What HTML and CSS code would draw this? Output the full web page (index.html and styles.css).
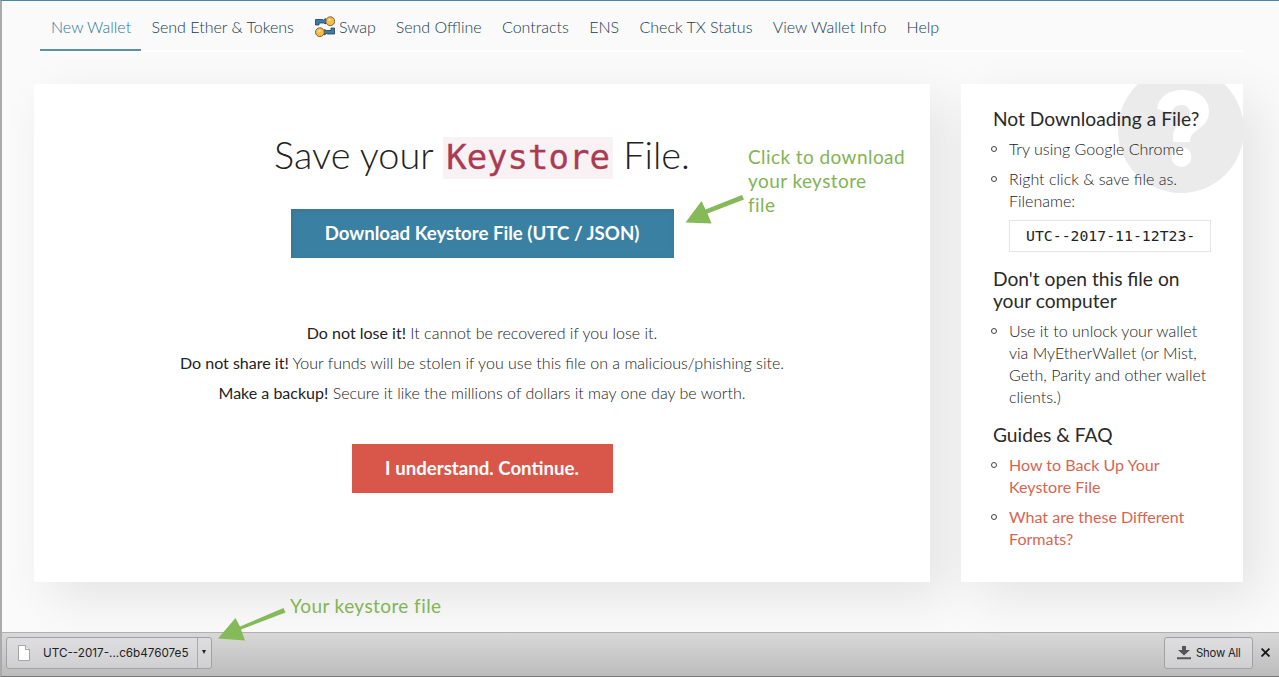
FILE: index.html
```html
<!DOCTYPE html>
<html lang="en">
<head>
<meta charset="utf-8">
<title>Save your Keystore File</title>
<link rel="stylesheet" href="styles.css">
</head>
<body>
<div class="window">
  <nav class="tabs">
    <a class="tab active">New Wallet</a>
    <a class="tab">Send Ether &amp; Tokens</a>
    <a class="tab swap"><svg class="swap-icon" viewBox="0 0 20 22"><path fill="#3d7ca3" stroke="#1c3f55" stroke-width=".8" d="M.5 3.500h7l1 .5 2-1.500v5.500l-2-1H4v2H.5zM19.500 12H16v2.500h-4.500l-2-1v5.500l2-1.500 1 .5h7z"/><circle cx="15.300" cy="5.200" r="4.400" fill="#f5bd45" stroke="#80623c"/><circle cx="4.900" cy="16.200" r="4.400" fill="#f5bd45" stroke="#80623c"/><path d="M13.500 4.500l2-1M3.300 15.500l2-1" stroke="#ffe19a" stroke-width="2"/></svg>Swap</a>
    <a class="tab">Send Offline</a>
    <a class="tab">Contracts</a>
    <a class="tab">ENS</a>
    <a class="tab">Check TX Status</a>
    <a class="tab">View Wallet Info</a>
    <a class="tab">Help</a>
  </nav>
  <div class="content">
    <main class="card main">
      <h1>Save your <code>Keystore</code> File.</h1>
      <button class="btn primary">Download Keystore File (UTC / JSON)</button>
      <div class="warnings">
        <p><strong>Do not lose it!</strong> It cannot be recovered if you lose it.</p>
        <p><strong>Do not share it!</strong> Your funds will be stolen if you use this file on a malicious/phishing site.</p>
        <p><strong>Make a backup!</strong> Secure it like the millions of dollars it may one day be worth.</p>
      </div>
      <button class="btn danger">I understand. Continue.</button>
    </main>
    <aside class="card side">
      <svg class="help-mark" viewBox="0 0 126 126"><circle cx="63" cy="63" r="63" fill="#ebebeb"/><path fill="#fff" d="M39 42C41 29 51 23 65 23c16 0 26 9 26 21 0 10-6 15-12 19-5 4-7 6-7 12H55V70c0-8 4-12 9-16 5-3 8-5 8-9s-4-7-8-7c-6 0-9 3-11 8z"/><circle cx="63.500" cy="90" r="10" fill="#fff"/></svg>
      <h2>Not Downloading a File?</h2>
      <ul>
        <li>Try using Google Chrome</li>
        <li>Right click &amp; save file as.<br>Filename:<div class="filename">UTC--2017-11-12T23-</div></li>
      </ul>
      <h2 class="second">Don't open this file on<br>your computer</h2>
      <ul>
        <li>Use it to unlock your wallet<br>via MyEtherWallet (or Mist,<br>Geth, Parity and other wallet<br>clients.)</li>
      </ul>
      <h2 class="third">Guides &amp; FAQ</h2>
      <ul>
        <li><a>How to Back Up Your<br>Keystore File</a></li>
        <li><a>What are these Different<br>Formats?</a></li>
      </ul>
    </aside>
  </div>
  <footer class="downloads">
    <div class="download">
      <div class="file"><svg class="doc" viewBox="0 0 12 16"><path d="M.5.500h7l4 4v11H.5z" fill="#fff" stroke="#a5a5a5"/><path d="M7.500.500v4h4" fill="#eee" stroke="#a5a5a5"/></svg><span>UTC--2017-...c6b47607e5</span></div>
      <div class="more"></div>
    </div>
    <div class="show"><svg class="down" viewBox="0 0 14 14"><path fill="#555" d="M5 0h4v4h4L7 9.500 1 4h4zM0 11.300h14v2H0z"/></svg><span>Show All</span></div>
    <svg class="close" viewBox="0 0 8 8"><path d="M.5.500l7 7M7.500.500l-7 7" stroke="#151515" stroke-width="1.600"/></svg>
  </footer>
  <div class="note note-a">Click to download<br>your keystore<br>file</div>
  <div class="note note-b">Your keystore file</div>
  <svg class="arrow arrow-a" viewBox="0 0 60 30"><path fill="#86b958" d="M58.500 0l2 4.500L24 18.500l4 10L2 27.500 18 6l4 8.500z"/></svg>
  <svg class="arrow arrow-b" viewBox="0 0 70 34"><path fill="#86b958" d="M67.500 0l2 4.500L25 21.500l4 11L2 30.500 19.500 10l4.500 8.500z"/></svg>
</div>
</body>
</html>
```
FILE: styles.css
```css
* { box-sizing: border-box; }
body { margin: 0; font-family: Lato, "Open Sans", sans-serif; font-weight: 300; font-size: 16px; color: #222; }
.window { position: relative; display: flex; flex-direction: column; height: 677px; overflow: hidden; background: #fafafa; border-top: 1px solid #4c87a5; border-left: 2px solid #aaa; border-bottom: 1px solid #777; }
.tabs { display: flex; height: 51px; margin: 0 36px 0 38px; flex: none; background: linear-gradient(#fff, #fff) bottom / 100% 2px no-repeat; }
.tab { height: 50px; padding: 15px 9.900px 0 10.400px; line-height: 22px; font-size: 16.030px; color: #163a52; white-space: nowrap; }
.active { padding-left: 11px; color: #2f749d; border-bottom: 2px solid #5a8fa8; }
.swap { display: flex; gap: 4px; padding-left: 11.200px; padding-right: 9.300px; }
.swap-icon { width: 20px; height: 22px; }
.content { display: flex; gap: 31px; padding: 32px 36px 0 32px; height: 580px; flex: none; }
.card { background: #fff; height: 498px; box-shadow: 16px 16px 47px rgba(0,0,0,.09); }
.main { width: 896px; display: flex; flex-direction: column; align-items: center; }
h1 { margin: 49px 0 0; height: 44px; font-size: 37.900px; line-height: 44px; font-weight: 300; white-space: nowrap; }
code { display: inline-block; height: 42px; line-height: 40px; padding: 0 3px; background: #f9f2f4; color: #ab3b52; font-family: "DejaVu Sans Mono", monospace; font-size: 34px; -webkit-text-stroke: .3px #ab3b52; }
.btn { display: block; height: 49px; padding: 0; border: 0; color: #fff; font: 700 18.650px/49px Lato, sans-serif; white-space: nowrap; }
.primary { width: 383px; margin-top: 32px; background: #3a80a3; box-shadow: inset 2px 2px 5px rgba(60,110,130,.5); }
.danger { width: 261px; margin-top: 32px; background: #d9574a; }
.warnings { margin-top: 64px; text-align: center; }
.warnings p { margin: 0 0 8px; line-height: 22px; font-size: 16.030px; white-space: nowrap; }
strong { font-weight: 400; }
.side { position: relative; width: 282px; padding: 24px 32px; }
.help-mark { position: absolute; right: -1px; top: -17px; width: 126px; height: 126px; clip-path: inset(17px 1px 0 0); }
.side h2, .side ul { position: relative; }
h2 { margin: 0 0 8px; font-size: 19.200px; line-height: 22px; font-weight: 400; color: #2a2a2a; white-space: nowrap; }
.second, .third { margin-top: 16px; }
ul { margin: 0; padding: 0 0 0 16px; list-style: none; font-size: 16.060px; line-height: 22px; white-space: nowrap; }
li { position: relative; margin-bottom: 8px; }
li::before { content: ""; position: absolute; left: -18px; top: 8px; width: 6px; height: 6px; border: 1px solid #444; border-radius: 50%; box-sizing: border-box; }
li a { color: #d66553; font-weight: 400; }
.filename { width: 202px; height: 32px; margin-top: 8px; padding-left: 16px; border: 1px solid #e5e5e5; background: #fff; font: 14.800px/30px "DejaVu Sans Mono", monospace; }
.downloads { display: flex; align-items: center; flex: 1; padding: 0 9px 4px 4px; background: linear-gradient(#d8d8d8, #bcbcbc); border-top: 1px solid #b0b0b0; color: #222; font: 11.700px Inter, sans-serif; }
.download, .show { height: 32px; border: 1px solid #a2a2a5; border-radius: 3px; background: linear-gradient(#dedee0, #d0d0d3); display: flex; }
.download { width: 206px; }
.file { width: 191px; display: flex; align-items: center; padding-left: 11px; border-right: 1px solid #aaa; gap: 13px; white-space: nowrap; }
.doc { width: 12px; height: 16px; }
.more { width: 13px; padding: 12px 0 0 4px; }
.more::before { content: ""; display: block; width: 0; border: 2.500px solid transparent; border-top: 4px solid #222; }
.show { width: 89px; margin-left: auto; align-items: center; padding-left: 12px; gap: 5px; white-space: nowrap; font-size: 11.300px; letter-spacing: -.2px; }
.down { width: 14px; height: 14px; flex: none; }
.close { width: 9px; height: 9px; margin-left: 8px; }
.note { position: absolute; color: #82b455; font: 400 19px/24px "Proxima Nova", Lato, sans-serif; letter-spacing: .42px; white-space: nowrap; }
.note-a { left: 746px; top: 144px; }
.note-b { left: 288px; top: 593px; }
.arrow { position: absolute; }
.arrow-a { left: 681px; top: 194px; width: 61px; height: 30px; }
.arrow-b { left: 214px; top: 607px; width: 70px; height: 34px; }
```
